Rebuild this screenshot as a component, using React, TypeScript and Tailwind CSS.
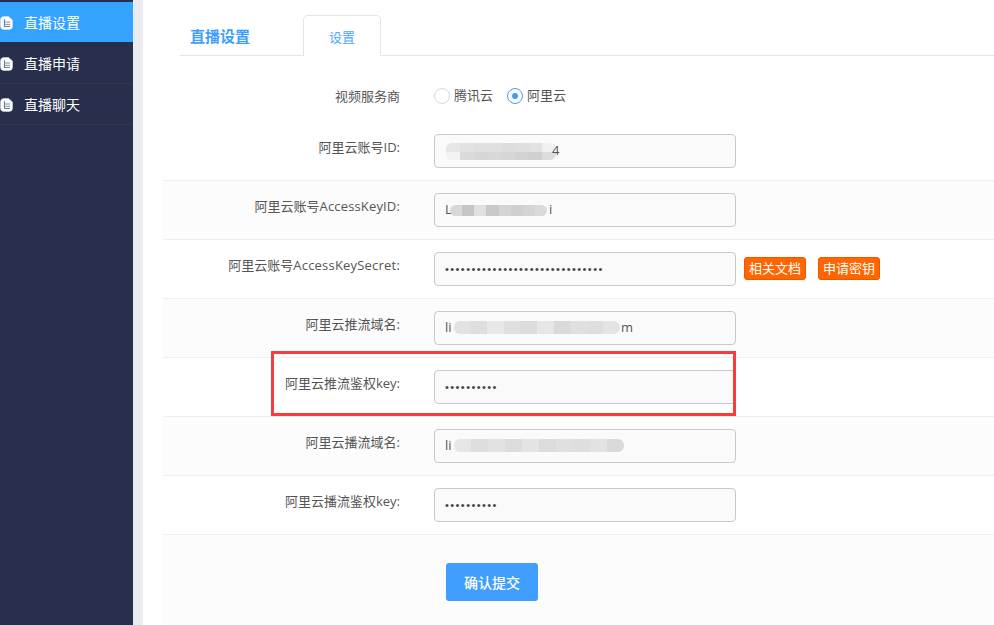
import React from "react";

const font = { fontFamily: '"Open Sans","Noto Sans CJK SC",sans-serif' };
const dotFont = { fontFamily: '"Liberation Sans",sans-serif' };

function DocIcon() {
  return (
    <svg width="13" height="14" viewBox="0 0 13 14" className="shrink-0">
      <path d="M4 0.5H8.5L12.5 4V10A3.5 3.5 0 0 1 9 13.5H4A3.5 3.5 0 0 1 0.5 10V4A3.5 3.5 0 0 1 4 0.5Z" fill="#fff" stroke="#dfe9f5" strokeWidth="0.5" />
      <path d="M4.5 3.2V10.5H10" fill="none" stroke="#6f7f9a" strokeWidth="1.2" />
      <rect x="5.2" y="5.4" width="5" height="1.2" fill="#8fa0b8" />
      <rect x="5.2" y="7.8" width="5" height="1.2" fill="#8fa0b8" />
    </svg>
  );
}

function NavItem({ label, active, h }: { label: string; active?: boolean; h: string }) {
  return (
    <div className={`flex items-center gap-[11px] pt-[2px] ${h} ${active ? "bg-[#33a3ff]" : "border-b border-[#2e3a4a]"}`}>
      <DocIcon />
      <span className="text-[14px] leading-none text-white">{label}</span>
    </div>
  );
}

function Mosaic({ cls, top, bottom }: { cls: string; top: string[]; bottom?: string[] }) {
  return (
    <div className={`absolute flex flex-col overflow-hidden rounded-[6px] ${cls}`}>
      {[top, bottom ?? top].map((colors, r) => (
        <div key={r} className="flex flex-1">
          {colors.map((c, i) => (
            <div key={i} className="flex-1" style={{ background: c }} />
          ))}
        </div>
      ))}
    </div>
  );
}

function Row({
  label,
  alt,
  children,
  extra,
}: {
  label: React.ReactNode;
  alt?: boolean;
  children?: React.ReactNode;
  extra?: React.ReactNode;
}) {
  return (
    <div className={`flex h-[59px] items-start border-b border-[#eeeeee] pt-[12px] ${alt ? "bg-[#fcfcfc]" : "bg-white"}`}>
      <div className="w-[237px] shrink-0 pt-[3px] text-right text-[13px] leading-[20px] text-[#555]">{label}</div>
      <div className="relative ml-[34px] flex h-[34px] w-[302px] shrink-0 items-center rounded-[4px] border border-[#c9c9c9] bg-[#fafafa] pl-[10px] text-[13px] text-[#555]">
        {children}
      </div>
      {extra}
    </div>
  );
}

function Dots({ n }: { n: number }) {
  return (
    <span style={dotFont} className="text-[11px] leading-none tracking-[1.44px] text-[#444]">
      {"•".repeat(n)}
    </span>
  );
}

function OrangeBtn({ children, cls }: { children: React.ReactNode; cls: string }) {
  return (
    <div className={`mt-[5px] flex h-[23px] w-[62px] items-center justify-center rounded-[3px] border border-[#f25500] bg-[#ff6600] text-[13px] leading-none text-white ${cls}`}>
      {children}
    </div>
  );
}

export default function App() {
  return (
    <div style={font} className="relative flex h-[625px] w-[994px] overflow-hidden bg-white">
      <aside className="h-full w-[133px] shrink-0 bg-[#272f4c] pt-[2px]">
        <NavItem label="直播设置" active h="h-[40px]" />
        <NavItem label="直播申请" h="h-[42px]" />
        <NavItem label="直播聊天" h="h-[41px]" />
      </aside>
      <div className="h-full w-[10px] shrink-0 bg-[#e9ebf1]" />
      <main className="flex-1 pl-[20px]">
        <div className="ml-[17px] flex h-[56px] border-b border-[#e1e3ee] pt-[15px]">
          <div className="w-[123px] pl-[10px] pt-[10px] text-[15px] font-bold leading-[22px] text-[#3d9eff]">直播设置</div>
          <div className="relative -mb-[1px] flex h-[41px] w-[78px] items-start justify-center rounded-t-[5px] border border-b-0 border-[#e1e3ee] bg-white pt-[10px] text-[13px] leading-[22px] text-[#4da6ff]">
            设置
          </div>
        </div>
        <div className="flex h-[65px] items-center pt-[14px]">
          <div className="w-[237px] shrink-0 text-right text-[13px] leading-[20px] text-[#555]">视频服务商</div>
          <div className="ml-[34px] flex items-center text-[13px] text-[#555]">
            <span className="h-[16px] w-[16px] rounded-full border border-[#d8d8d8] bg-white" />
            <span className="ml-[4px] w-[53px]">腾讯云</span>
            <span className="flex h-[16px] w-[16px] items-center justify-center rounded-full border border-[#3d9eff] bg-white">
              <span className="h-[6px] w-[6px] rounded-full bg-[#3d9eff]" />
            </span>
            <span className="ml-[4px]">阿里云</span>
          </div>
        </div>
        <div className="h-[1px]" />
        <Row label="阿里云账号ID:">
          <span>1</span>
          <Mosaic
            cls="left-[11px] top-[8px] h-[17px] w-[110px]"
            top={["#e6e6e6", "#e2e2e2", "#e0e0e0", "#e0e0e0", "#dddddd", "#dfdfdf", "#e2e2e2", "#f0f0f0"]}
            bottom={["#f2f2f2", "#dadada", "#d6d6d6", "#d8d8d8", "#d6d6d6", "#d2d2d2", "#d0d0d0", "#dcdcdc"]}
          />
          <span className="absolute left-[117px]">4</span>
        </Row>
        <Row label={<>阿里云账号<span className="tracking-[0.15px]">AccessKeyID:</span></>} alt>
          <span>L</span>
          <Mosaic cls="left-[15px] top-[11px] h-[11px] w-[97px]" top={["#d8d8d8", "#c6c6c6", "#e0e0e0", "#c8c8c8", "#d4d4d4", "#cfcfcf", "#d4d4d4", "#dadada"]} />
          <span className="absolute left-[114px]">i</span>
        </Row>
        <Row
          label={<>阿里云账号<span className="tracking-[0.2px]">AccessKeySecret:</span></>}
          extra={
            <div className="flex">
              <OrangeBtn cls="ml-[8px]">相关文档</OrangeBtn>
              <OrangeBtn cls="ml-[12px]">申请密钥</OrangeBtn>
            </div>
          }
        >
          <Dots n={30} />
        </Row>
        <Row label="阿里云推流域名:" alt>
          <span>li</span>
          <Mosaic cls="left-[19px] top-[9px] h-[13px] w-[166px]" top={["#e2e2e2", "#dedede", "#e8e8e8", "#e0e0e0", "#dcdcdc", "#e6e6e6", "#dadada", "#e0e0e0", "#dedede", "#e4e4e4"]} />
          <span className="absolute left-[186px]">m</span>
        </Row>
        <Row label="阿里云推流鉴权key:">
          <Dots n={10} />
        </Row>
        <Row label="阿里云播流域名:" alt>
          <span>li</span>
          <Mosaic cls="left-[19px] top-[9px] h-[13px] w-[170px]" top={["#e6e6e6", "#dedede", "#e2e2e2", "#dcdcdc", "#e4e4e4", "#dcdcdc", "#e0e0e0", "#dedede", "#e2e2e2", "#dadada"]} />
        </Row>
        <Row label="阿里云播流鉴权key:">
          <Dots n={10} />
        </Row>
        <div className="h-[91px] bg-[#fcfcfc] pl-[283px] pt-[28px]">
          <div className="flex h-[38px] w-[92px] items-center justify-center rounded-[3px] bg-[#409eff] text-[14px] font-medium text-white">确认提交</div>
        </div>
      </main>
      <div className="absolute left-[271px] top-[351px] h-[65px] w-[465px] border-[3px] border-[#f73c3c]" />
    </div>
  );
}
